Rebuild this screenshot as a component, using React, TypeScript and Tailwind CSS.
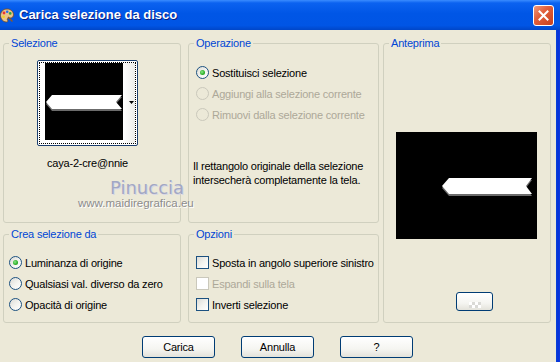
import React from 'react';

const labelFont = "font-['Liberation_Sans',Arial,sans-serif] text-[11px] tracking-[-0.2px] leading-[14px]";

function Radio({ label, checked = false, disabled = false }: { label: string; checked?: boolean; disabled?: boolean }) {
  return (
    <div className="flex items-center h-[21px] gap-[3px]">
      <span
        className={[
          'w-[13px] h-[13px] rounded-full border flex items-center justify-center shrink-0',
          disabled
            ? 'border-[#CAC8BB] bg-transparent'
            : 'border-[#1C5180] bg-[linear-gradient(135deg,#DCDCD7_0%,#F4F4F0_55%,#FFFFFF_100%)]',
        ].join(' ')}
      >
        {checked && (
          <span className="w-[5px] h-[5px] rounded-full bg-[radial-gradient(circle_at_40%_40%,#8EE68A_0%,#2FB42B_55%,#1A8A18_100%)]" />
        )}
      </span>
      <span className={`${labelFont} ${disabled ? 'text-[#ACA899]' : 'text-black'}`}>{label}</span>
    </div>
  );
}

function Check({ label, disabled = false }: { label: string; disabled?: boolean }) {
  return (
    <div className="flex items-center h-[21px] gap-[3px]">
      <span
        className={[
          'w-[13px] h-[13px] border shrink-0',
          disabled
            ? 'border-[#CAC8BB] bg-white'
            : 'border-[#1C5180] bg-[linear-gradient(135deg,#DCDCD7_0%,#F4F4F0_55%,#FFFFFF_100%)]',
        ].join(' ')}
      />
      <span className={`${labelFont} ${disabled ? 'text-[#ACA899]' : 'text-black'}`}>{label}</span>
    </div>
  );
}

function Group({ title, className, children }: { title: string; className: string; children?: React.ReactNode }) {
  return (
    <fieldset className={`border border-[#D0D0BF] rounded-[3px] flex flex-col ${className}`}>
      <legend className={`ml-[5px] px-[2px] text-[#0046D5] ${labelFont}`}>{title}</legend>
      {children}
    </fieldset>
  );
}

function XpButton({ label, className = '' }: { label: string; className?: string }) {
  return (
    <button
      className={`h-[22px] w-[73px] rounded-[3px] border border-[#003C74] bg-[linear-gradient(to_bottom,#FFFFFF_0%,#F5F5F1_60%,#E3E2DA_100%)] text-black ${labelFont} ${className}`}
    >
      {label}
    </button>
  );
}

// banner-shaped selection (points left, notched on the right)
function Banner({ w, h }: { w: number; h: number }) {
  const tip = Math.round(h * 0.45);
  const notch = Math.round(h * 0.4);
  return (
    <svg width={w} height={h + 2} viewBox={`0 0 ${w} ${h + 2}`}>
      <polygon
        points={`0,${h / 2 + 1} ${tip},1 ${w},1 ${w - notch},${h / 2 + 1} ${w},${h + 1} ${tip},${h + 1}`}
        fill="#6b6b6b"
        transform="translate(0,1)"
      />
      <polygon points={`0,${h / 2} ${tip},0 ${w},0 ${w - notch},${h / 2} ${w},${h} ${tip},${h}`} fill="#ffffff" />
    </svg>
  );
}

function PaletteIcon() {
  return (
    <svg width="14" height="15" viewBox="0 0 14 15">
      <path d="M7 1C3 1 0.5 4 0.5 7.5c0 3.6 2.8 6.5 6 6.5 1.4 0 1.6-1 1-2-0.6-1 0-2 1.2-2h1.5c2.2 0 3.3-1.4 3.3-3.3C13.5 3.6 10.8 1 7 1z" fill="#E9C48A" stroke="#7A4A1A" strokeWidth="0.8" />
      <circle cx="4" cy="5" r="1.4" fill="#E33" />
      <circle cx="7.2" cy="3.8" r="1.3" fill="#2A6CE8" />
      <circle cx="10.2" cy="5.4" r="1.3" fill="#2DA83A" />
      <circle cx="3.6" cy="8.8" r="1.3" fill="#F2D21B" />
      <path d="M8 9 L12.5 13.5" stroke="#8B5A2B" strokeWidth="1.4" />
    </svg>
  );
}

export default function App() {
  return (
    <div className="relative w-[560px] h-[362px] overflow-hidden bg-[#ECE9D8] flex flex-col">
      {/* Title bar */}
      <div className="h-[30px] shrink-0 flex items-center bg-[linear-gradient(to_bottom,#3A8CFF_0%,#0B62F0_10%,#0056E6_45%,#0055E5_85%,#0046C8_100%)]">
        <div className="w-[19px] pl-0 flex items-center">
          <PaletteIcon />
        </div>
        <span className="font-['Liberation_Sans',Arial,sans-serif] font-bold text-[13px] text-white [text-shadow:1px_1px_0_#0A1E80]">
          Carica selezione da disco
        </span>
        <div className="ml-auto mr-[6px] w-[21px] h-[21px] rounded-[3px] border border-white bg-[linear-gradient(135deg,#F09A7C_0%,#E2603C_40%,#C8401C_100%)] flex items-center justify-center">
          <svg width="11" height="11" viewBox="0 0 11 11">
            <path d="M1.5 1.5 L9.5 9.5 M9.5 1.5 L1.5 9.5" stroke="#fff" strokeWidth="2" strokeLinecap="square" />
          </svg>
        </div>
      </div>

      <div className="flex flex-1">
        {/* Body */}
        <div className="w-[556px] pl-[3px] pt-[6px] flex flex-col">
          <div className="flex">
            {/* Left column */}
            <div className="w-[178px] flex flex-col gap-[4px]">
              <Group title="Selezione" className="h-[187px]">
                <div className="ml-[33px] mt-[10px] w-[101px] flex flex-col items-center">
                  <div className="w-[101px] h-[86px] border border-[#1C3F6E] rounded-[2px] bg-white p-[1px]">
                    <div className="h-full border border-dotted border-black flex">
                      <div className="ml-[5px] w-[78px] h-[77px] bg-black flex items-center">
                        <div className="mt-[2px] ml-[1px]">
                          <Banner w={76} h={14} />
                        </div>
                      </div>
                      <div className="flex-1 bg-[linear-gradient(to_right,#FFFFFF,#EDEDEA)] flex items-center justify-end pr-[1px]">
                        <svg width="5" height="3" viewBox="0 0 5 3" className="mt-[-1px]">
                          <polygon points="0,0 5,0 2.5,3" fill="#000" />
                        </svg>
                      </div>
                    </div>
                  </div>
                  <div className={`mt-[10px] text-black ${labelFont}`}>caya-2-cre@nnie</div>
                </div>
              </Group>
              <Group title="Crea selezione da" className="h-[96px]">
                <div className="mt-[11px] pl-[5px] flex flex-col">
                  <Radio label="Luminanza di origine" checked />
                  <Radio label="Qualsiasi val. diverso da zero" />
                  <Radio label="Opacità di origine" />
                </div>
              </Group>
            </div>

            {/* Middle column */}
            <div className="ml-[7px] w-[191px] flex flex-col gap-[4px]">
              <Group title="Operazione" className="h-[187px]">
                <div className="mt-[12px] pl-[7px] flex flex-col">
                  <Radio label="Sostituisci selezione" checked />
                  <Radio label="Aggiungi alla selezione corrente" disabled />
                  <Radio label="Rimuovi dalla selezione corrente" disabled />
                </div>
                <p className={`mt-[34px] pl-[4px] text-black ${labelFont}`}>
                  Il rettangolo originale della selezione
                  <br />
                  intersecherà completamente la tela.
                </p>
              </Group>
              <Group title="Opzioni" className="h-[96px]">
                <div className="mt-[11px] pl-[7px] flex flex-col">
                  <Check label="Sposta in angolo superiore sinistro" />
                  <Check label="Espandi sulla tela" disabled />
                  <Check label="Inverti selezione" />
                </div>
              </Group>
            </div>

            {/* Right column */}
            <div className="ml-[4px] w-[168px]">
              <Group title="Anteprima" className="h-[287px]">
                <div className="ml-[12px] mt-[82px] w-[141px] h-[107px] bg-black flex items-start">
                  <div className="ml-[46px] mt-[46px]">
                    <Banner w={90} h={16} />
                  </div>
                </div>
                <button className="ml-[72px] mt-[53px] w-[37px] h-[19px] rounded-[3px] border border-[#003C74] bg-[linear-gradient(to_bottom,#FFFFFF_0%,#F5F5F1_60%,#E3E2DA_100%)] flex items-end justify-center pb-[2px]">
                  <span className="grid grid-cols-4 w-[12px] h-[6px]">
                    <span className="bg-white" />
                    <span className="bg-[#DADAD6]" />
                    <span className="bg-white" />
                    <span className="bg-[#DADAD6]" />
                    <span className="bg-[#DADAD6]" />
                    <span className="bg-white" />
                    <span className="bg-[#DADAD6]" />
                    <span className="bg-white" />
                  </span>
                </button>
              </Group>
            </div>
          </div>

          {/* Buttons */}
          <div className="mt-[13px] ml-[139px] flex gap-[26px]">
            <XpButton label="Carica" className="w-[72px]" />
            <XpButton label="Annulla" />
            <XpButton label="?" className="w-[72px]" />
          </div>
        </div>

        {/* Right window frame */}
        <div className="w-[4px] bg-[linear-gradient(to_right,#0845D8,#0831D9,#0A3CE0)]" />
      </div>

      {/* Watermark */}
      <div className="absolute left-[110px] top-[179px] font-['DejaVu_Sans',sans-serif] text-[18px] leading-none text-[#A2A7C4] [text-shadow:1px_1px_0_#D8D8E6]">
        Pinuccia
      </div>
      <div className="absolute left-[78px] top-[198px] font-['Liberation_Sans',Arial,sans-serif] text-[11.5px] leading-none text-[#8C8C8C] [text-shadow:1px_1px_0_#FFFFFF]">
        www.maidiregrafica.eu
      </div>
    </div>
  );
}
